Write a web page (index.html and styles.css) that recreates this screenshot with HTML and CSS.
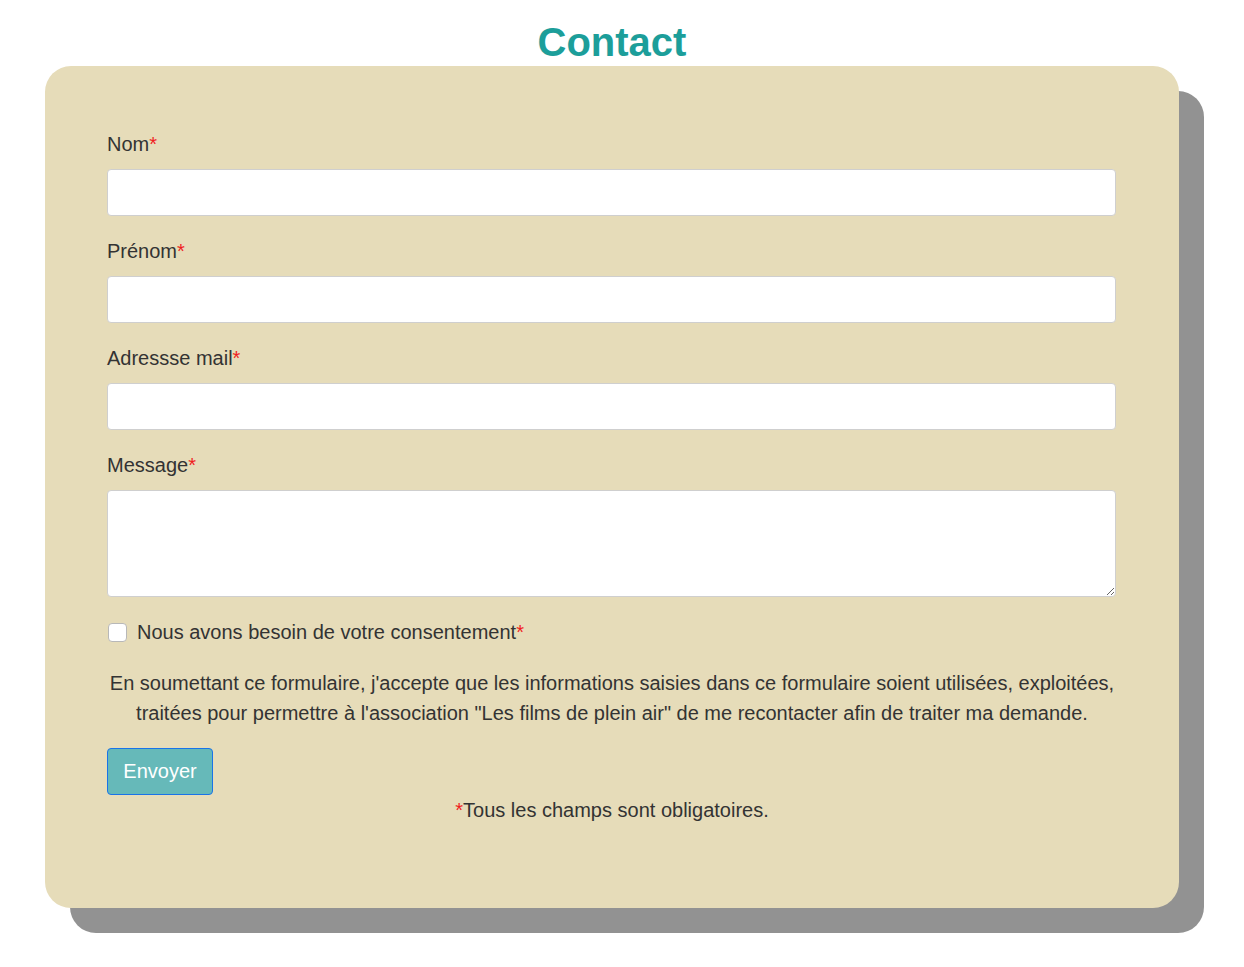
FILE: index.html
```html
<!DOCTYPE html>
<html lang="fr">
<head>
<meta charset="utf-8">
<title>Contact</title>
<link rel="stylesheet" href="styles.css">
</head>
<body>
<main class="page">
  <h1 class="title">Contact</h1>
  <div class="card-wrap">
    <form class="card">
      <div class="field">
        <label class="label" for="nom">Nom<span class="req">*</span></label>
        <input class="input" id="nom" type="text">
      </div>
      <div class="field">
        <label class="label" for="prenom">Prénom<span class="req">*</span></label>
        <input class="input" id="prenom" type="text">
      </div>
      <div class="field">
        <label class="label" for="mail">Adressse mail<span class="req">*</span></label>
        <input class="input" id="mail" type="email">
      </div>
      <div class="field">
        <label class="label" for="msg">Message<span class="req">*</span></label>
        <textarea class="input textarea" id="msg"></textarea>
      </div>
      <div class="check-row">
        <span class="checkbox"></span>
        <span class="check-text">Nous avons besoin de votre consentement<span class="req">*</span></span>
      </div>
      <p class="notice">En soumettant ce formulaire, j'accepte que les informations saisies dans ce formulaire soient utilisées, exploitées, traitées pour permettre à l'association "Les films de plein air" de me recontacter afin de traiter ma demande.</p>
      <div class="actions">
        <button class="btn" type="button">Envoyer</button>
      </div>
      <p class="footnote"><span class="req">*</span>Tous les champs sont obligatoires.</p>
    </form>
  </div>
</main>
</body>
</html>
```
FILE: styles.css
```css
* { box-sizing: border-box; }
html, body { margin: 0; padding: 0; background: #fff; }
body {
  font-family: "Liberation Sans", Arial, sans-serif;
  color: #333333;
}
.page {
  width: 1244px;
  min-height: 967px;
  padding: 18px 0 40px 45px;
}
.title {
  margin: 0;
  width: 1134px;
  text-align: center;
  font-size: 40px;
  line-height: 48px;
  font-weight: 700;
  color: #1c9e9a;
}
.card-wrap {
  width: 1134px;
}
.card {
  background: #e6dcb9;
  border-radius: 26px;
  box-shadow: 25px 25px 0 0 #929292;
  padding: 63px 62px 83px 62px;
  display: flex;
  flex-direction: column;
}
.field {
  display: flex;
  flex-direction: column;
  margin-bottom: 20px;
}
.label {
  font-size: 20px;
  line-height: 30px;
  margin-bottom: 10px;
}
.req { color: #f01e1e; }
.input {
  display: block;
  width: 1009px;
  height: 47px;
  background: #fff;
  border: 1px solid #cfcfcf;
  border-radius: 4px;
  font: inherit;
}
.textarea {
  height: 107px;
  resize: vertical;
}
.check-row {
  display: flex;
  align-items: center;
  gap: 10px;
  height: 30px;
  padding-left: 1px;
}
.checkbox {
  width: 19px;
  height: 19px;
  border: 1px solid #b8b8b8;
  border-radius: 4px;
  background: #fff;
}
.check-text {
  font-size: 20px;
  line-height: 30px;
}
.notice {
  margin: 21px 0 0;
  text-align: center;
  font-size: 20px;
  line-height: 30px;
}
.actions {
  margin-top: 20px;
  display: flex;
}
.btn {
  width: 106px;
  height: 47px;
  background: #66b9b9;
  color: #fff;
  border: 1px solid #1a73e8;
  border-radius: 4px;
  font-family: "Liberation Sans", Arial, sans-serif;
  font-size: 20px;
  padding: 0;
}
.footnote {
  margin: 0;
  text-align: center;
  font-size: 20px;
  line-height: 30px;
}
```
